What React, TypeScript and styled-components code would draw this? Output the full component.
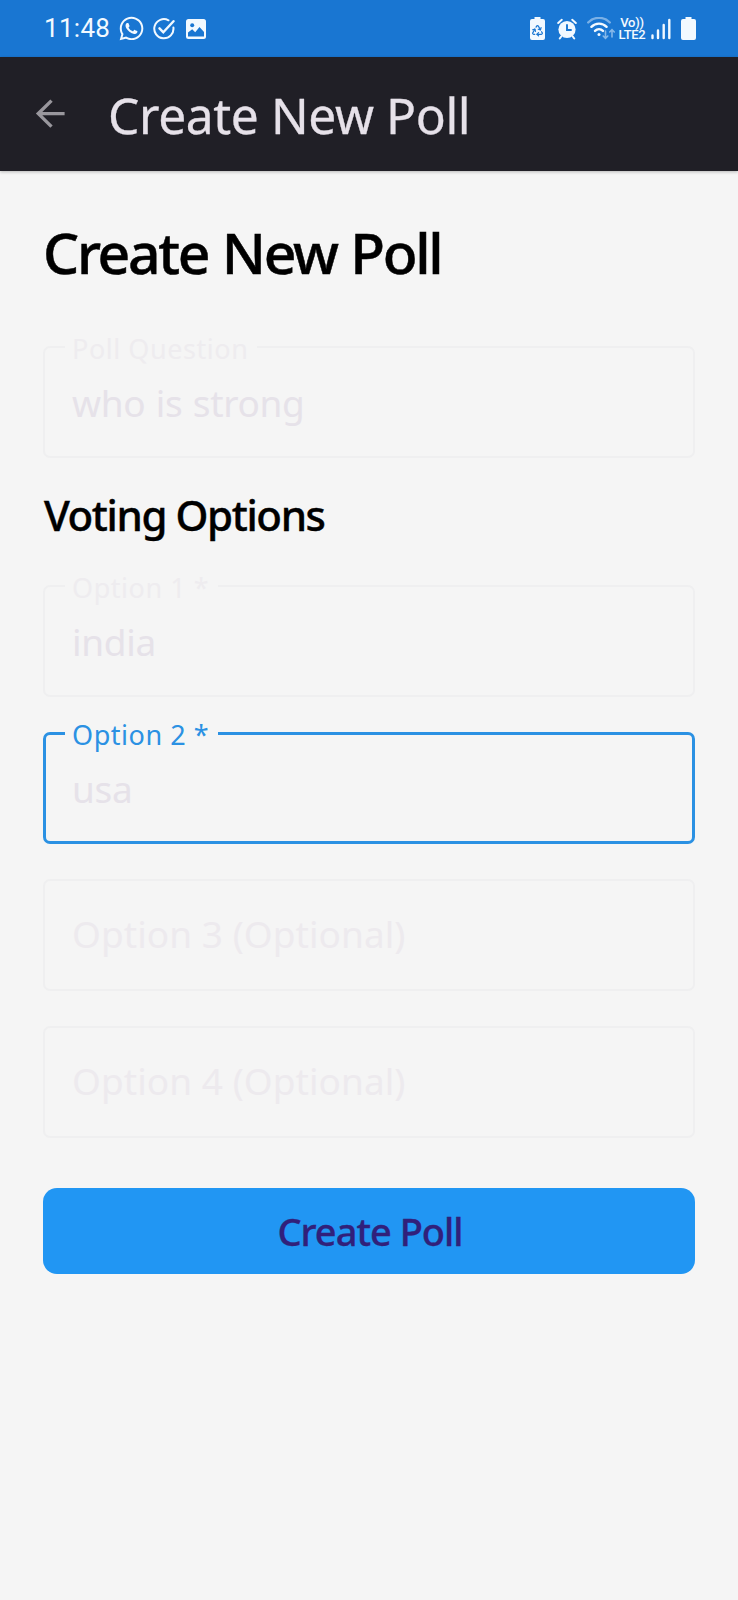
import React from "react";
import styled, { createGlobalStyle } from "styled-components";
import { FaWhatsapp } from "react-icons/fa";
import { Recycle } from "lucide-react";

const GlobalStyle = createGlobalStyle`
  *, *::before, *::after { box-sizing: border-box; }
  body {
    margin: 0;
    background: #f5f5f5;
    font-family: "Noto Sans", "Open Sans", sans-serif;
  }
`;

const Screen = styled.div`
  display: flex;
  flex-direction: column;
  width: 738px;
  min-height: 1600px;
  background: #f5f5f5;
`;

const StatusBar = styled.div`
  display: flex;
  align-items: center;
  justify-content: space-between;
  height: 57px;
  padding: 0 42px 0 44px;
  background: #1976d2;
  color: #f2f9ff;
`;

const StatusGroup = styled.div`
  display: flex;
  align-items: center;
`;

const Clock = styled.span`
  width: 74px;
  font: 400 26px/57px Roboto, sans-serif;
  letter-spacing: 0.3px;
`;

const StatusIcon = styled.span<{ $gap?: number }>`
  display: flex;
  margin-left: ${(p) => p.$gap ?? 0}px;
`;

const BatterySaver = styled.span`
  display: grid;
  place-items: center;
  > * { grid-area: 1 / 1; }
  > :last-child { margin-top: 3px; }
`;

const Network = styled.span`
  display: flex;
  flex-direction: column;
  align-items: center;
  width: 28px;
  margin-left: 2px;
  font: 500 13px/12px Roboto, sans-serif;
  letter-spacing: -0.3px;
  white-space: nowrap;
`;

const AppBar = styled.header`
  display: flex;
  align-items: center;
  height: 114px;
  padding-left: 35px;
  background: #201f26;
  box-shadow: 0 1px 3px rgba(0, 0, 0, 0.25);
`;

const BackButton = styled.button`
  display: flex;
  width: 73px;
  padding: 0;
  border: 0;
  background: none;
`;

const AppBarTitle = styled.div`
  padding-top: 2px;
  color: #e6e1e9;
  font-size: 49.7px;
  line-height: 68px;
  letter-spacing: -0.4px;
  -webkit-text-stroke: 0.3px currentColor;
`;

const Form = styled.main`
  display: flex;
  flex-direction: column;
  padding: 46px 43px 0;
`;

const Heading = styled.h1`
  margin: 0 0 59px;
  color: #000;
  font-size: 57px;
  font-weight: 500;
  line-height: 70px;
  letter-spacing: -2.3px;
  word-spacing: 1px;
  white-space: nowrap;
  -webkit-text-stroke: 0.5px currentColor;
`;

const SectionTitle = styled.h2`
  margin: 30px 0 43px;
  padding-left: 1px;
  color: #000;
  font-size: 42px;
  font-weight: 500;
  line-height: 54px;
  letter-spacing: -1.4px;
  -webkit-text-stroke: 0.4px currentColor;
`;

const FieldList = styled.div`
  display: flex;
  flex-direction: column;
  gap: 35px;
`;

const FieldBox = styled.div<{ $focused?: boolean }>`
  position: relative;
  display: flex;
  align-items: center;
  height: 112px;
  padding-left: ${(p) => (p.$focused ? 26 : 27)}px;
  border: ${(p) => (p.$focused ? "3px solid #2b91e3" : "2px solid #efeff0")};
  border-radius: 7px;
`;

const FieldLabel = styled.span<{ $focused?: boolean }>`
  position: absolute;
  top: ${(p) => (p.$focused ? -17 : -16)}px;
  left: ${(p) => (p.$focused ? 19 : 20)}px;
  padding: 0 9px 0 7px;
  background: #f5f5f5;
  color: ${(p) => (p.$focused ? "#2b91e3" : "#eeecef")};
  font-size: 27px;
  line-height: 34px;
  letter-spacing: 0.55px;
  white-space: nowrap;
`;

const FieldText = styled.span<{ $empty?: boolean }>`
  padding-top: ${(p) => (p.$empty ? 0 : 2)}px;
  padding-bottom: ${(p) => (p.$empty ? 3 : 0)}px;
  color: ${(p) => (p.$empty ? "#edeaee" : "#e6e2e9")};
  font-size: 37px;
  line-height: 50px;
  letter-spacing: ${(p) => (p.$empty ? 0.05 : -0.3)}px;
  word-spacing: ${(p) => (p.$empty ? 0 : 1)}px;
  white-space: nowrap;
`;

const SubmitButton = styled.button`
  height: 86px;
  margin-top: 50px;
  padding: 0 0 0 2px;
  border: 0;
  border-radius: 14px;
  background: #2196f3;
  color: #31207a;
  font: 500 38px/50px "Noto Sans", sans-serif;
  letter-spacing: -1px;
  -webkit-text-stroke: 0.3px currentColor;
`;

type FieldProps = { label: string; value?: string; focused?: boolean };

function Field({ label, value, focused }: FieldProps) {
  return (
    <FieldBox $focused={focused}>
      {value && <FieldLabel $focused={focused}>{label}</FieldLabel>}
      <FieldText $empty={!value}>{value ?? label}</FieldText>
    </FieldBox>
  );
}

const BatteryShape = () => (
  <svg width="15" height="23" viewBox="0 0 15 23" fill="currentColor">
    <path d="M4.5 0h6v2H13a2 2 0 0 1 2 2v17a2 2 0 0 1-2 2H2a2 2 0 0 1-2-2V4a2 2 0 0 1 2-2h2.500z" />
  </svg>
);

const CheckCircle = () => (
  <svg width="22" height="22" viewBox="0 0 22 22" fill="none" stroke="currentColor" strokeWidth="2" strokeLinecap="round">
    <path d="M15.500 2.300A9.600 9.600 0 1 0 20.400 9.500" />
    <path d="M6.500 10.300l3.800 4L20.500 3.200" strokeWidth="2.400" />
  </svg>
);

const Picture = () => (
  <svg width="20" height="20" viewBox="0 0 20 20">
    <rect width="20" height="20" rx="2.500" fill="currentColor" />
    <circle cx="6.200" cy="6.200" r="2" fill="#1976d2" />
    <path d="M2 17.500V13.500l4.200-3.300 3 3 4.300-5.200 4.500 5v4.500z" fill="#1976d2" />
  </svg>
);

const Alarm = () => (
  <svg width="20" height="22" viewBox="0 0 20 22" fill="none" stroke="currentColor" strokeLinecap="round">
    <circle cx="10" cy="11.500" r="8.600" fill="currentColor" stroke="none" />
    <path d="M1.200 5l3.600-3.200M18.800 5l-3.600-3.200M4.200 18.500l-1.400 2M15.800 18.500l1.400 2" strokeWidth="2" />
    <path d="M10 7v5h4" stroke="#1976d2" strokeWidth="1.900" />
  </svg>
);

const Wifi = () => (
  <svg width="29" height="23" viewBox="0 0 29 23" fill="none" stroke="currentColor" strokeWidth="2.400" strokeLinecap="round">
    <path d="M1.200 5.500a15 15 0 0 1 21.600 0" opacity="0.45" />
    <path d="M4.400 9.800a10.600 10.600 0 0 1 15.200 0M8 13.900a5.800 5.800 0 0 1 8 0" />
    <circle cx="12" cy="17.500" r="1.500" fill="currentColor" stroke="none" />
    <path d="M18.500 14v7M16.200 19l2.300 2.400 2.300-2.400M25 20v-7M22.700 15l2.300-2.400 2.300 2.400" strokeWidth="1.600" opacity="0.5" />
  </svg>
);

const Signal = () => (
  <svg width="20" height="22" viewBox="0 0 20 22" fill="none" stroke="currentColor" strokeWidth="2.400" strokeLinecap="round">
    <path d="M1.500 17.500v2.500M7 12.500v7.500M12.700 7v13M18.300 2v18" />
  </svg>
);

export default function App() {
  return (
    <Screen>
      <GlobalStyle />
      <StatusBar>
        <StatusGroup>
          <Clock>11:48</Clock>
          <StatusIcon><FaWhatsapp size={27} /></StatusIcon>
          <StatusIcon $gap={8}><CheckCircle /></StatusIcon>
          <StatusIcon $gap={11}><Picture /></StatusIcon>
        </StatusGroup>
        <StatusGroup>
          <BatterySaver>
            <BatteryShape />
            <Recycle size={13} color="#1976d2" strokeWidth={2.2} />
          </BatterySaver>
          <StatusIcon $gap={12}><Alarm /></StatusIcon>
          <StatusIcon $gap={10}><Wifi /></StatusIcon>
          <Network>
            <span>Vo))</span>
            <span>LTE2</span>
          </Network>
          <StatusIcon $gap={5}><Signal /></StatusIcon>
          <StatusIcon $gap={10}><BatteryShape /></StatusIcon>
        </StatusGroup>
      </StatusBar>
      <AppBar>
        <BackButton aria-label="Back">
          <svg width="30" height="30" viewBox="0 0 30 30" fill="none" stroke="#99979d" strokeWidth="3.400">
            <path d="M29.600 14.600H3.500M16.500 1.600L3.300 14.600l13.200 13" />
          </svg>
        </BackButton>
        <AppBarTitle>Create New Poll</AppBarTitle>
      </AppBar>
      <Form>
        <Heading>Create New Poll</Heading>
        <Field label="Poll Question" value="who is strong" />
        <SectionTitle>Voting Options</SectionTitle>
        <FieldList>
          <Field label="Option 1 *" value="india" />
          <Field label="Option 2 *" value="usa" focused />
          <Field label="Option 3 (Optional)" />
          <Field label="Option 4 (Optional)" />
        </FieldList>
        <SubmitButton>Create Poll</SubmitButton>
      </Form>
    </Screen>
  );
}
